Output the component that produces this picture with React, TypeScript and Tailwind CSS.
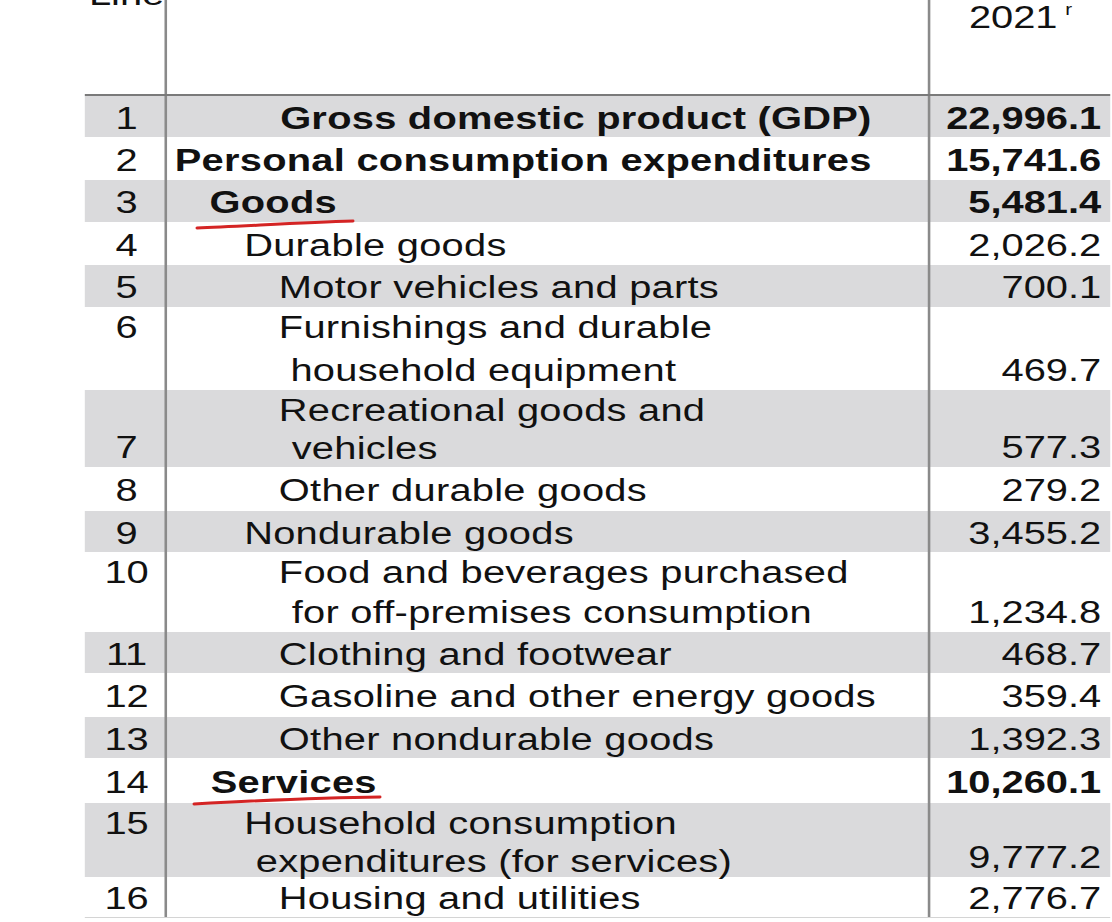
import React from "react";

type Line = { t: string; pl: string };
type Row = {
  n: string;
  lines: Line[];
  v: string;
  bold?: boolean;
  gray: boolean;
  h: string;
  numPos?: "top" | "bottom";
};

const rows: Row[] = [
  { n: "1", lines: [{ t: "Gross domestic product (GDP)", pl: "pl-[88px]" }], v: "22,996.1", bold: true, gray: true, h: "h-[41px]" },
  { n: "2", lines: [{ t: "Personal consumption expenditures", pl: "pl-[6px]" }], v: "15,741.6", bold: true, gray: false, h: "h-[43px]" },
  { n: "3", lines: [{ t: "Goods", pl: "pl-[33px]" }], v: "5,481.4", bold: true, gray: true, h: "h-[42px]" },
  { n: "4", lines: [{ t: "Durable goods", pl: "pl-[60px]" }], v: "2,026.2", gray: false, h: "h-[43px]" },
  { n: "5", lines: [{ t: "Motor vehicles and parts", pl: "pl-[87px]" }], v: "700.1", gray: true, h: "h-[42px]" },
  {
    n: "6",
    lines: [
      { t: "Furnishings and durable", pl: "pl-[87px]" },
      { t: "household equipment", pl: "pl-[96px]" },
    ],
    v: "469.7",
    gray: false,
    h: "h-[83px]",
    numPos: "top",
  },
  {
    n: "7",
    lines: [
      { t: "Recreational goods and", pl: "pl-[87px]" },
      { t: "vehicles", pl: "pl-[97px]" },
    ],
    v: "577.3",
    gray: true,
    h: "h-[77px]",
    numPos: "bottom",
  },
  { n: "8", lines: [{ t: "Other durable goods", pl: "pl-[87px]" }], v: "279.2", gray: false, h: "h-[44px]" },
  { n: "9", lines: [{ t: "Nondurable goods", pl: "pl-[60px]" }], v: "3,455.2", gray: true, h: "h-[41px]" },
  {
    n: "10",
    lines: [
      { t: "Food and beverages purchased", pl: "pl-[87px]" },
      { t: "for off-premises consumption", pl: "pl-[97px]" },
    ],
    v: "1,234.8",
    gray: false,
    h: "h-[80px]",
    numPos: "top",
  },
  { n: "11", lines: [{ t: "Clothing and footwear", pl: "pl-[87px]" }], v: "468.7", gray: true, h: "h-[41px]" },
  { n: "12", lines: [{ t: "Gasoline and other energy goods", pl: "pl-[87px]" }], v: "359.4", gray: false, h: "h-[44px]" },
  { n: "13", lines: [{ t: "Other nondurable goods", pl: "pl-[87px]" }], v: "1,392.3", gray: true, h: "h-[41px]" },
  { n: "14", lines: [{ t: "Services", pl: "pl-[34px]" }], v: "10,260.1", bold: true, gray: false, h: "h-[45px]" },
  {
    n: "15",
    lines: [
      { t: "Household consumption", pl: "pl-[60px]" },
      { t: "expenditures (for services)", pl: "pl-[69px]" },
    ],
    v: "9,777.2",
    gray: true,
    h: "h-[74px]",
    numPos: "top",
  },
  { n: "16", lines: [{ t: "Housing and utilities", pl: "pl-[87px]" }], v: "2,776.7", gray: false, h: "h-[41px]" },
];

function TableRow({ r, last }: { r: Row; last: boolean }) {
  const double = r.lines.length > 1;
  const numJustify = !double ? "justify-center" : r.numPos === "top" ? "justify-start" : "justify-end";
  const lh = double ? "leading-[38px]" : "leading-[31px]";
  return (
    <div
      className={`flex ${r.h} ${r.gray ? "bg-[#dadadc]" : "bg-white"} ${
        last ? "border-b border-[#d4d4d4]" : ""
      }`}
    >
      <div className={`flex w-[62px] shrink-0 flex-col ${numJustify} pl-[3px] ${double ? "pt-[2px]" : "pt-[3px]"}`}>
        <div className={`text-center ${lh}`}>{r.n}</div>
      </div>
      <div
        className={`flex flex-1 flex-col ${double ? "justify-between pt-[2px]" : "justify-center pt-[3px]"} border-l-2 border-[#8a8a8a] tracking-[0.2px] ${
          r.bold ? "font-bold" : ""
        }`}
      >
        {r.lines.map((l, i) => (
          <div key={i} className={`${l.pl} ${lh} whitespace-nowrap`}>
            {l.t}
          </div>
        ))}
      </div>
      <div
        className={`flex w-[142px] shrink-0 flex-col ${double ? "justify-end" : "justify-center pt-[3px]"} border-l-2 border-[#8a8a8a] pr-[7px] text-right ${
          r.bold ? "font-bold" : ""
        }`}
      >
        <div className={lh}>{r.v}</div>
      </div>
    </div>
  );
}

export default function App() {
  return (
    <div className="relative h-[922px] w-[1112px] overflow-hidden bg-white font-['Liberation_Sans',Arial,sans-serif] text-[31px] text-[#111111]">
      <div className="w-[866px] origin-top-left scale-x-[1.285]">
        <div className="ml-[66px] w-[798px]">
          {/* header */}
          <div className="flex h-[94px]">
            <div className="w-[62px] shrink-0 pl-[3px]">
              <div className="-mt-[21px] text-center leading-[31px]">Line</div>
            </div>
            <div className="flex-1 border-l-2 border-[#8a8a8a]" />
            <div className="w-[142px] shrink-0 border-l-2 border-[#8a8a8a] pl-[30px] pt-[2px] leading-[31px]">
              2021
              <span className="ml-[6px] align-top text-[16px] leading-[16px]">r</span>
            </div>
          </div>
          <div className="border-t-2 border-[#7a7a7a]">
            {rows.map((r, i) => (
              <TableRow key={r.n} r={r} last={i === rows.length - 1} />
            ))}
          </div>
        </div>
      </div>
      <svg
        className="pointer-events-none absolute inset-0"
        width="1112"
        height="922"
        viewBox="0 0 1112 922"
      >
        <path
          d="M197 228 C 240 226.5, 300 222.5, 353 221"
          fill="none"
          stroke="#d42424"
          strokeWidth="3"
          strokeLinecap="round"
        />
        <path
          d="M194 804 C 240 801.5, 320 797.5, 380 797"
          fill="none"
          stroke="#d42424"
          strokeWidth="3"
          strokeLinecap="round"
        />
      </svg>
    </div>
  );
}
